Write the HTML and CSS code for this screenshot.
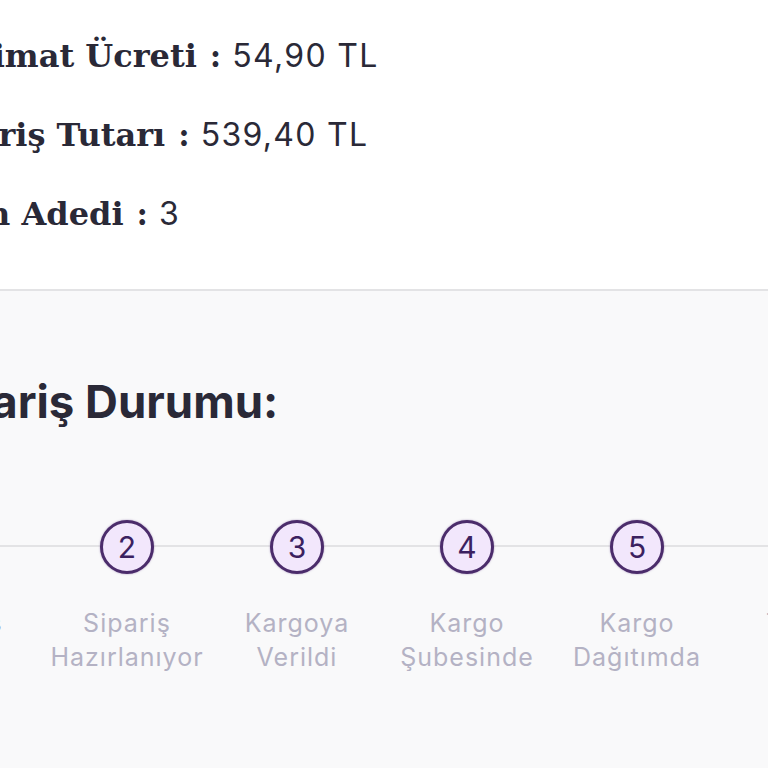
FILE: index.html
```html
<!DOCTYPE html>
<html lang="tr">
<head>
<meta charset="utf-8">
<link rel="stylesheet" href="styles.css">
</head>
<body>
<section class="summary">
  <div class="row row-fee"><span class="label">Talimat Ücreti</span><span class="colon">:</span><span class="value">54,90 TL</span></div>
  <div class="row row-total"><span class="label">Sipariş Tutarı</span><span class="colon">:</span><span class="value">539,40 TL</span></div>
  <div class="row row-count"><span class="label">Ürün Adedi</span><span class="colon">:</span><span class="value">3</span></div>
</section>
<section class="status">
  <h2 class="title">Sipariş Durumu:</h2>
  <div class="steps">
    <div class="step active"><div class="dot">1</div><div class="name">Sipariş<br>Alındı</div></div>
    <div class="step"><div class="dot">2</div><div class="name">Sipariş<br>Hazırlanıyor</div></div>
    <div class="step"><div class="dot">3</div><div class="name">Kargoya<br>Verildi</div></div>
    <div class="step"><div class="dot">4</div><div class="name">Kargo<br>Şubesinde</div></div>
    <div class="step"><div class="dot">5</div><div class="name">Kargo<br>Dağıtımda</div></div>
    <div class="step"><div class="dot">6</div><div class="name">Teslim<br>Edildi</div></div>
  </div>
</section>
</body>
</html>
```
FILE: styles.css
```css
html, body {
  margin: 0;
  padding: 0;
  width: 768px;
  height: 768px;
  overflow: hidden;
  background: #f9f9fa;
}
.summary {
  background: #ffffff;
  height: 291px;
  padding-top: 36px;
  box-sizing: border-box;
  border-bottom: 2px solid #e3e3e5;
  overflow: hidden;
}
.row {
  display: flex;
  align-items: baseline;
  height: 79px;
  white-space: nowrap;
  color: #2a2937;
}
.row-fee { margin-left: -61px; }
.row-total { margin-left: -80px; }
.row-count { margin-left: -81px; }
.label {
  font-family: "DejaVu Serif", serif;
  font-weight: bold;
  font-size: 32px;
}
.colon {
  font-family: "DejaVu Serif", serif;
  font-weight: bold;
  font-size: 31px;
  margin: 0 11px 0 13px;
}
.value {
  font-family: Inter, "Noto Sans", sans-serif;
  font-size: 32px;
  font-weight: 400;
  letter-spacing: 1.3px;
}
.status {
  overflow: hidden;
}
.title {
  margin: 83px 0 0 -80px;
  font-family: Inter, "Noto Sans", sans-serif;
  font-weight: 700;
  font-size: 45.5px;
  color: #2a2937;
  white-space: nowrap;
}
.steps {
  display: flex;
  margin: 91px 0 0 -128px;
  width: 1100px;
  background: linear-gradient(#e3e3e5, #e3e3e5) no-repeat 0 25px / 100% 2px;
}
.step {
  flex: 0 0 170px;
  display: flex;
  flex-direction: column;
  align-items: center;
}
.dot {
  width: 48px;
  height: 48px;
  border: 3px solid #4b2c6b;
  border-radius: 50%;
  background: #f2e7fc;
  box-shadow: 0 0 2px rgba(90, 50, 130, 0.5);
  display: flex;
  align-items: center;
  justify-content: center;
  font-family: Inter, "Noto Sans", sans-serif;
  font-size: 30px;
  color: #3b2160;
}
.name {
  margin-top: 32px;
  text-align: center;
  font-family: Inter, "Noto Sans", sans-serif;
  font-size: 25px;
  letter-spacing: 1px;
  line-height: 34px;
  color: #b4b2c4;
  white-space: nowrap;
}
.step.active .name {
  color: #6a3d90;
  font-weight: 600;
}
```
